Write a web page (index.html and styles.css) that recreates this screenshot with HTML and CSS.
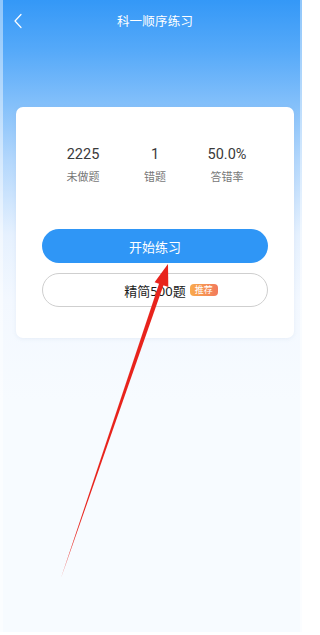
FILE: index.html
```html
<!DOCTYPE html>
<html lang="zh-CN">
<head>
<meta charset="utf-8">
<title>科一顺序练习</title>
<link rel="stylesheet" href="styles.css">
</head>
<body>
<div class="page">
  <header class="nav">
    <svg class="back" width="10" height="16" viewBox="0 0 10 16"><path d="M8 1.5 L2 8 L8 14.5" fill="none" stroke="#fff" stroke-width="1.2" stroke-linecap="round" stroke-linejoin="round"/></svg>
    <h1 class="title">科一顺序练习</h1>
  </header>
  <section class="card">
    <div class="stats">
      <div class="stat"><div class="num">2225</div><div class="label">未做题</div></div>
      <div class="stat"><div class="num">1</div><div class="label">错题</div></div>
      <div class="stat"><div class="num">50.0%</div><div class="label">答错率</div></div>
    </div>
    <button class="btn btn-primary">开始练习</button>
    <button class="btn btn-outline"><span class="btn-text">精简500题<span class="badge">推荐</span></span></button>
  </section>
  <svg class="arrow" width="302" height="635" viewBox="0 0 302 635">
    <polygon points="163.6,284.8 159.2,283.2 61,578" fill="#e8231c"/>
    <polygon points="168,264 168.3,287 154.6,282.2" fill="#e8231c"/>
  </svg>
</div>
</body>
</html>
```
FILE: styles.css
```css
* { box-sizing: border-box; margin: 0; padding: 0; }
html, body { width: 302px; height: 635px; overflow: hidden; }
body {
  font-family: "Noto Sans", "Noto Sans CJK SC", sans-serif;
  background: #fff;
}
.page {
  position: relative;
  width: 302px;
  height: 635px;
  background: linear-gradient(180deg, #3498f7 0px, #55a9f9 50px, #84c0fa 105px, #b3d7fc 160px, #e6f1fe 235px, #f3f8ff 300px, #f7fbff 400px);
  box-shadow: inset 3px 0 0 rgba(255,255,255,0.45), inset -2px 0 0 rgba(255,255,255,0.45), inset 0 -3px 0 #fff;
  display: flex;
  flex-direction: column;
}
.nav {
  position: relative;
  height: 40px;
  display: flex;
  align-items: center;
  justify-content: center;
  padding-left: 8px;
}
.back {
  position: absolute;
  left: 13px;
  top: 12.5px;
}
.title {
  font-size: 12.5px;
  font-weight: 400;
  color: #fff;
  letter-spacing: 0.2px;
}
.card {
  margin: 67px 8px 0 16px;
  height: 231px;
  background: #fff;
  border-radius: 7px;
  box-shadow: 0 1px 4px rgba(120,150,190,0.12);
  padding: 38px 26px 0;
  display: flex;
  flex-direction: column;
}
.stats {
  display: grid;
  grid-template-columns: repeat(3, 72px);
  justify-content: center;
  text-align: center;
}
.num {
  font-family: Roboto, "Noto Sans", sans-serif;
  font-size: 14.5px;
  line-height: 20px;
  color: #3a3a3a;
}
.label {
  margin-top: 4px;
  font-size: 11px;
  line-height: 16px;
  color: #777;
}
.btn {
  height: 34px;
  border-radius: 17px;
  font-family: inherit;
  font-size: 13px;
  display: flex;
  align-items: center;
  justify-content: center;
}
.btn-primary {
  margin-top: 44px;
  background: #2f96f6;
  border: none;
  color: #fff;
}
.btn-outline {
  margin-top: 10px;
  background: #fff;
  border: 1px solid #cfcfcf;
  color: #1a1a1a;
}
.btn-text { position: relative; }
.badge {
  position: absolute;
  left: calc(100% + 4px);
  top: 50%;
  transform: translateY(-50%);
  height: 12px;
  padding: 0 5px;
  border-radius: 4px;
  background: linear-gradient(90deg, #f9aa4c, #f27a5c);
  color: #fff;
  font-size: 9px;
  line-height: 12px;
  white-space: nowrap;
}
.arrow {
  position: absolute;
  left: 0;
  top: 0;
  pointer-events: none;
}
```
